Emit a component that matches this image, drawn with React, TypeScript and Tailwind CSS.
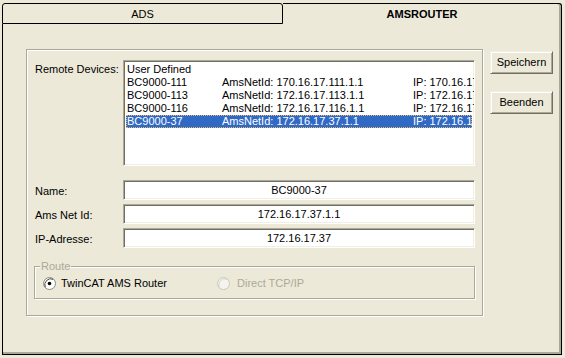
import React from "react";

/* AMS-Router-Dialog im XP-Look: Tabs, Geräteliste, Felder, Route-Gruppe. */

const GERAETE = [
  { name: "User Defined", net: "", ip: "" },
  { name: "BC9000-111", net: "AmsNetId: 170.16.17.111.1.1", ip: "IP: 170.16.17.111" },
  { name: "BC9000-113", net: "AmsNetId: 172.16.17.113.1.1", ip: "IP: 172.16.17.113" },
  { name: "BC9000-116", net: "AmsNetId: 172.16.17.116.1.1", ip: "IP: 172.16.17.116" },
  { name: "BC9000-37", net: "AmsNetId: 172.16.17.37.1.1", ip: "IP: 172.16.17.37" },
];

const FELDER = [
  { label: "Name:", wert: "BC9000-37" },
  { label: "Ams Net Id:", wert: "172.16.17.37.1.1" },
  { label: "IP-Adresse:", wert: "172.16.17.37" },
];

const SUNKEN =
  "border border-t-[#aca899] border-l-[#aca899] border-r-white border-b-white shadow-[inset_1px_1px_0_#716f64,inset_-1px_-1px_0_#f1efe2]";

function Radio({ an, aus }: { an?: boolean; aus?: boolean }) {
  return (
    <svg width="13" height="13" viewBox="0 0 13 13" className="shrink-0">
      <circle cx="6.5" cy="6.5" r="6" fill={aus ? "#f4f3ee" : "#ffffff"} stroke={aus ? "#cac8bb" : "#8d8b80"} strokeWidth="1" />
      <path d="M2.3 10.2 A6 6 0 0 1 10.2 2.3" fill="none" stroke={aus ? "#d6d4c8" : "#4a4a44"} strokeWidth="1" />
      {an && <circle cx="6.5" cy="6.5" r="1.8" fill="#000" />}
    </svg>
  );
}

function Knopf({ children }: { children: React.ReactNode }) {
  return (
    <button
      type="button"
      className="flex h-[23px] w-[63px] items-center justify-center border border-t-[#f1efe2] border-l-[#f1efe2] border-r-[#716f64] border-b-[#716f64] bg-[#ece9d8] text-[11px] text-black shadow-[inset_1px_1px_0_#ffffff,inset_-1px_-1px_0_#aca899]"
    >
      {children}
    </button>
  );
}

export default function App() {
  return (
    <div
      className="h-[358px] w-[565px] overflow-hidden bg-[#ece9d8] px-[2px] pt-[3px] text-[11px] leading-[13px] text-black"
      style={{ fontFamily: '"Liberation Sans", Arial, sans-serif' }}
    >
      {/* Tabs */}
      <div className="flex w-[560px] items-start">
        <div className="flex h-[21px] w-[281px] items-center justify-center rounded-tl-[3px] rounded-tr-[3px] border border-black bg-[#ece9d8] pt-[1px]">
          ADS
        </div>
        <div className="flex h-[21px] w-[279px] items-center justify-center rounded-tr-[3px] border-t border-r border-black bg-[#ece9d8] font-bold shadow-[inset_-2px_0_0_#aca899]">
          AMSROUTER
        </div>
      </div>

      {/* Seite */}
      <div className="flex h-[331px] w-[560px] items-start border-r border-b border-l border-black pl-[23px] pt-[25px] shadow-[inset_-2px_-2px_0_#aca899]">
        {/* Gruppe */}
        <div className="flex h-[267px] w-[457px] flex-col border border-[#aca899] pl-[8px] pt-[10px] shadow-[inset_1px_1px_0_#ffffff,1px_1px_0_#ffffff]">
          <div className="flex">
            <span className="w-[88px] pt-[3px]">Remote Devices:</span>
            <div className={"h-[106px] w-[352px] overflow-hidden bg-white p-[2px] " + SUNKEN}>
              {GERAETE.map((g, i) => {
                const sel = i === 4;
                return (
                  <div
                    key={g.name}
                    className={
                      "relative flex h-[13px] whitespace-nowrap " +
                      (sel ? "bg-[#316ac5] text-white outline-1 -outline-offset-1 outline-dotted outline-[#e3b866]" : "")
                    }
                  >
                    <span className="w-[96px] shrink-0 pl-[1px]">{g.name}</span>
                    <span className="w-[191px] shrink-0">{g.net}</span>
                    <span className="shrink-0">{g.ip}</span>
                  </div>
                );
              })}
            </div>
          </div>

          <div className="mt-[14px] flex flex-col gap-[4px]">
            {FELDER.map((f) => (
              <div key={f.label} className="flex items-center">
                <span className="w-[88px] pt-[2px]">{f.label}</span>
                <div className={"flex h-[20px] w-[352px] items-center justify-center bg-white " + SUNKEN}>
                  {f.wert}
                </div>
              </div>
            ))}
          </div>

          {/* Route */}
          <div className="relative mt-[18px] ml-[-1px] h-[33px] w-[441px] border border-[#aca899] shadow-[inset_1px_1px_0_#ffffff,1px_1px_0_#ffffff]">
            <span className="absolute -top-[7px] left-[5px] bg-[#ece9d8] px-[1px] text-[#aca899]">Route</span>
            <div className="flex items-center pl-[8px] pt-[10px]">
              <div className="flex w-[174px] items-center gap-[5px]">
                <Radio an />
                <span>TwinCAT AMS Router</span>
              </div>
              <div className="flex items-center gap-[7px] text-[#aca899]">
                <Radio aus />
                <span>Direct TCP/IP</span>
              </div>
            </div>
          </div>
        </div>

        {/* Knöpfe */}
        <div className="ml-[7px] mt-[2px] flex flex-col gap-[17px]">
          <Knopf>Speichern</Knopf>
          <Knopf>Beenden</Knopf>
        </div>
      </div>
    </div>
  );
}
